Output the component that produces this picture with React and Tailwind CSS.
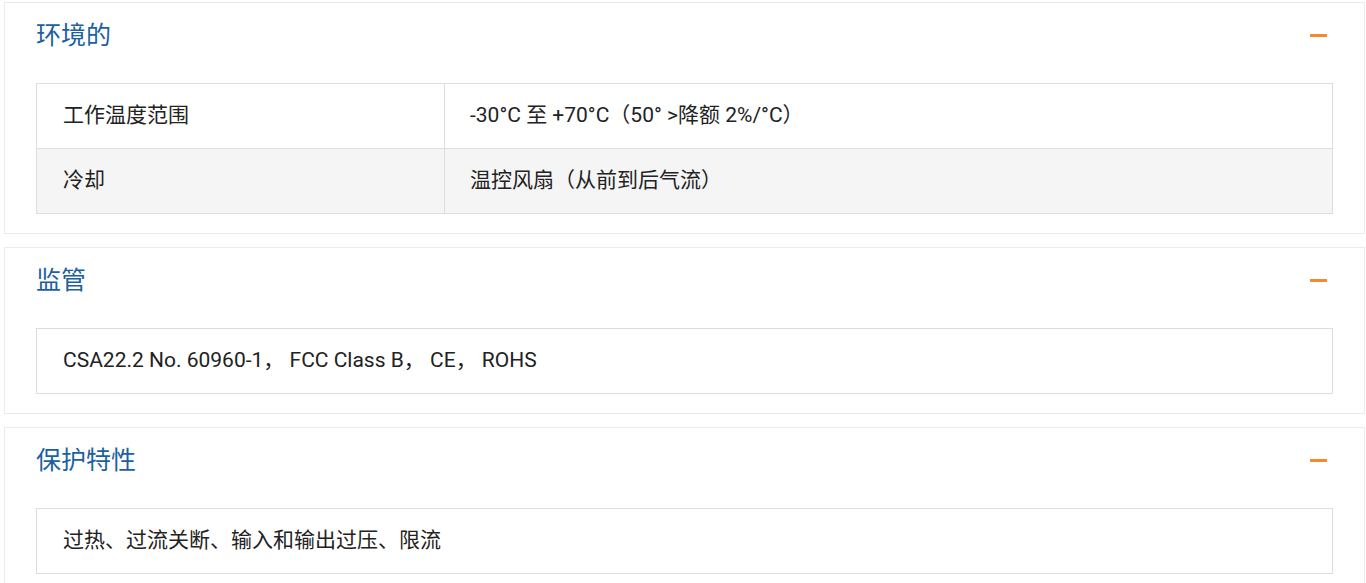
const sections = [
  {
    title: '环境的',
    rows: [
      ['工作温度范围', '-30°C 至 +70°C（50° >降额 2%/°C）'],
      ['冷却', '温控风扇（从前到后气流）'],
    ],
  },
  {
    title: '监管',
    text: 'CSA22.2 No. 60960-1， FCC Class B， CE， ROHS',
  },
  {
    title: '保护特性',
    text: '过热、过流关断、输入和输出过压、限流',
  },
];

function Section({ title, rows, text }) {
  return (
    <div className="border border-[#ebebeb] bg-white">
      {/* Header */}
      <div className="flex h-[64px] items-center justify-between pl-[31px] pr-[37px]">
        <h2 className="text-[25px] leading-none font-normal text-[#1c5fa3]">{title}</h2>
        <div className="h-[3px] w-[17px] bg-[#f5892b]" />
      </div>

      {/* Body */}
      <div className="px-[31px] pt-4 pb-[19px]">
        {rows ? (
          <table className="w-full border-collapse text-[21px] text-[#222]">
            <tbody>
              {rows.map(([k, v], i) => (
                <tr key={k} className={i % 2 === 1 ? 'bg-[#f5f5f5]' : 'bg-white'}>
                  <td className="h-[65px] w-[408px] border border-[#dddddd] px-[26px] align-middle">{k}</td>
                  <td className="h-[65px] border border-[#dddddd] px-[25px] align-middle">{v}</td>
                </tr>
              ))}
            </tbody>
          </table>
        ) : (
          <div className="flex h-[66px] items-center border border-[#dddddd] px-[26px] text-[21px] text-[#222]">
            {text}
          </div>
        )}
      </div>
    </div>
  );
}

export default function App() {
  return (
    <div
      className="flex flex-col gap-[13px] bg-white pt-[2px] pl-[4px] pr-[1px] pb-8"
      style={{ fontFamily: 'Roboto, "Noto Sans CJK SC", sans-serif' }}
    >
      {sections.map((s) => (
        <Section key={s.title} {...s} />
      ))}
    </div>
  );
}
